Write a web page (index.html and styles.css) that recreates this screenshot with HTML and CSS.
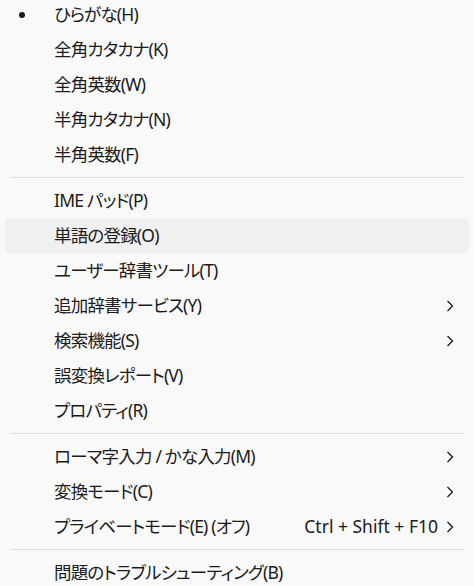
FILE: index.html
```html
<!DOCTYPE html>
<html lang="ja">

<head>
    <meta charset="UTF-8">
    <meta name="viewport" content="width=device-width, initial-scale=1.0">
    <title>IME メニュー</title>
    <link rel="stylesheet" href="styles.css">
</head>

<body>

    <ul class="menu">
        <li class="item"><span class="mark"><span class="dot"></span></span><span class="label">ひらがな(H)</span></li>
        <li class="item"><span class="mark"></span><span class="label">全角カタカナ(K)</span></li>
        <li class="item"><span class="mark"></span><span class="label">全角英数(W)</span></li>
        <li class="item"><span class="mark"></span><span class="label">半角カタカナ(N)</span></li>
        <li class="item"><span class="mark"></span><span class="label">半角英数(F)</span></li>

        <li class="sep"></li>

        <li class="item"><span class="mark"></span><span class="label">IME パッド(P)</span></li>
        <li class="item hover"><span class="mark"></span><span class="label">単語の登録(O)</span></li>
        <li class="item"><span class="mark"></span><span class="label">ユーザー辞書ツール(T)</span></li>
        <li class="item"><span class="mark"></span><span class="label">追加辞書サービス(Y)</span>
            <svg class="arrow" width="8" height="12" viewBox="0 0 8 12"><path d="M1.5 1 L6.5 6 L1.5 11" /></svg>
        </li>
        <li class="item"><span class="mark"></span><span class="label">検索機能(S)</span>
            <svg class="arrow" width="8" height="12" viewBox="0 0 8 12"><path d="M1.5 1 L6.5 6 L1.5 11" /></svg>
        </li>
        <li class="item"><span class="mark"></span><span class="label">誤変換レポート(V)</span></li>
        <li class="item"><span class="mark"></span><span class="label">プロパティ(R)</span></li>

        <li class="sep"></li>

        <li class="item"><span class="mark"></span><span class="label">ローマ字入力 / かな入力(M)</span>
            <svg class="arrow" width="8" height="12" viewBox="0 0 8 12"><path d="M1.5 1 L6.5 6 L1.5 11" /></svg>
        </li>
        <li class="item"><span class="mark"></span><span class="label">変換モード(C)</span>
            <svg class="arrow" width="8" height="12" viewBox="0 0 8 12"><path d="M1.5 1 L6.5 6 L1.5 11" /></svg>
        </li>
        <li class="item"><span class="mark"></span><span class="label">プライベートモード(E) (オフ)</span>
            <span class="accel">Ctrl + Shift + F10</span>
            <svg class="arrow" width="8" height="12" viewBox="0 0 8 12"><path d="M1.5 1 L6.5 6 L1.5 11" /></svg>
        </li>

        <li class="sep"></li>

        <li class="item"><span class="mark"></span><span class="label">問題のトラブルシューティング(B)</span></li>
    </ul>

</body>

</html>
```

FILE: styles.css
```css
body {
  margin: 0;
  background-color: #f9f9f9;
  color: #1a1a1a;
  font-family: "Noto Sans", "Noto Sans CJK JP", sans-serif;
  font-size: 17.5px;
  /* proportional kana, like the system UI font */
  font-feature-settings: "palt" 1;
  overflow: hidden;
}

.menu {
  list-style: none;
  margin: -3px 0 0 0;
  padding: 0 5px;
}

.item {
  display: flex;
  align-items: center;
  height: 35px;
  line-height: 35px;
  border-radius: 4px;
  padding-right: 15px;
}

.item.hover {
  background-color: #f0f0f0;
}

.mark {
  display: flex;
  align-items: center;
  width: 49px;
  height: 35px;
  padding-left: 14px;
  box-sizing: border-box;
  flex-shrink: 0;
}

.dot {
  width: 6px;
  height: 6px;
  border-radius: 50%;
  background: #1a1a1a;
}

.label {
  flex: 1;
  white-space: nowrap;
  letter-spacing: -0.8px;
}

.accel {
  white-space: nowrap;
  margin-right: 8px;
}

.arrow {
  flex-shrink: 0;
}

.arrow path {
  fill: none;
  stroke: #1a1a1a;
  stroke-width: 1.3;
}

.sep {
  height: 1px;
  margin: 5px 5px;
  background-color: #dedede;
}
```
